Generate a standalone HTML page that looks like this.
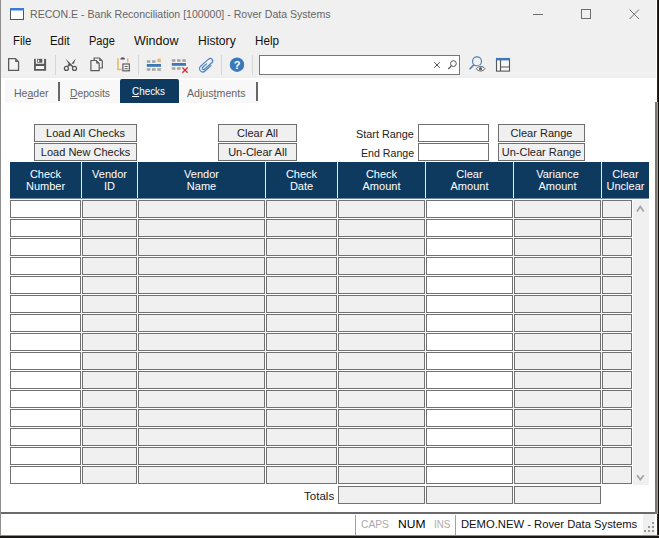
<!DOCTYPE html><html><head><meta charset="utf-8"><title>RECON.E</title><style>
*{box-sizing:border-box;margin:0;padding:0}
html,body{width:659px;height:538px;overflow:hidden;background:#fff}
body{position:relative;font-family:"Liberation Sans",sans-serif;font-size:11px;color:#000}
.a{position:absolute}
.top{left:0;top:0;width:656px;height:78px;background:#f0f0f0}
.sep{width:1px;background:#d6d6d6;top:55px;height:20px}
.tabbg{background:#f8f8f8;top:80px;height:23px}
.tsep{width:2px;background:#666;top:82px;height:19px}
.btn{border:1px solid #6f6f6f;background:#f0f0f0;height:18px;text-align:center;line-height:16px;font-size:11px;white-space:nowrap;color:#222}
.inp{border:1px solid #6f6f6f;background:#fff;height:18px}
.hd{background:#0f3a60;top:162px;height:36px;color:#fff;text-align:center;font-size:11px;line-height:12px;padding-top:5.5px;white-space:nowrap}
.c{border:1px solid #727272;height:18px}
.w{background:#fff}.g{background:#f0f0f0}
.t{white-space:nowrap;line-height:16px;transform-origin:0 50%}
</style></head><body>
<div class="a top"></div>
<div class="a" style="left:1px;top:73px;width:655px;height:1px;background:#f4f4f4"></div>
<div class="a" style="left:1px;top:74px;width:655px;height:4px;background:#eeeeee"></div>
<div class="a" style="left:1px;top:75px;width:655px;height:1px;background:#f2f2f2"></div>
<div class="a" style="left:0;top:0;width:1px;height:538px;background:#8e8e8e"></div>
<div class="a" style="left:657px;top:0;width:1px;height:538px;background:#2a2a2a"></div>
<div class="a" style="left:658px;top:0;width:1px;height:538px;background:#120e0c"></div>
<div class="a" style="left:0;top:535px;width:659px;height:1px;background:#8c8c8c"></div>
<div class="a" style="left:0;top:536px;width:659px;height:2px;background:#1a1614"></div>
<svg class="a" style="left:10px;top:8px" width="14" height="12" viewBox="0 0 14 12"><rect x="0.5" y="0.5" width="13" height="11" fill="#fff" stroke="#555" stroke-width="1"/><rect x="0" y="0" width="14" height="2.5" fill="#3a7bd5"/></svg>
<div class="a t" style="left:30px;top:5.69px;font-size:11px;color:#666;transform:scaleX(0.9600)">RECON.E - Bank Reconciliation [100000] - Rover Data Systems</div>
<svg class="a" style="left:530px;top:5px" width="120" height="20" viewBox="0 0 120 20"><path d="M3 9.5H13" stroke="#6e6e6e" stroke-width="1" fill="none"/><rect x="51.5" y="4.5" width="9" height="9" stroke="#6e6e6e" stroke-width="1" fill="none"/><path d="M99.5 4.5L109 14M109 4.5L99.5 14" stroke="#6e6e6e" stroke-width="1" fill="none"/></svg>
<div class="a t" style="left:13px;top:33.14px;font-size:12px;color:#111;transform:scaleX(0.9464)">File</div>
<div class="a t" style="left:50px;top:33.14px;font-size:12px;color:#111;transform:scaleX(0.9478)">Edit</div>
<div class="a t" style="left:89.4px;top:33.14px;font-size:12px;color:#111;transform:scaleX(0.9206)">Page</div>
<div class="a t" style="left:134px;top:33.14px;font-size:12px;color:#111;transform:scaleX(1.0403)">Window</div>
<div class="a t" style="left:197.5px;top:33.14px;font-size:12px;color:#111;transform:scaleX(1.0097)">History</div>
<div class="a t" style="left:254.6px;top:33.14px;font-size:12px;color:#111;transform:scaleX(0.9724)">Help</div>
<div class="a sep" style="left:55px"></div>
<div class="a sep" style="left:138px"></div>
<div class="a sep" style="left:221px"></div>
<div class="a sep" style="left:252px"></div>
<svg class="a" style="left:0;top:52px" width="520" height="26" viewBox="0 52 520 26"><path d="M8.65 58.65H15.4L18.55 61.8V70.35H8.65Z" fill="#f4f4f4" stroke="#5a5a5a" stroke-width="1.3"/><path d="M15.2 58.9V62H18.4Z" fill="#5a5a5a"/><rect x="34" y="58.9" width="12.1" height="11.85" fill="#5a5a5a"/><rect x="35.8" y="58.6" width="8.3" height="5.2" fill="#f0f0f0"/><rect x="37.2" y="58.9" width="5.1" height="3.8" fill="#5a5a5a"/><rect x="38" y="59.8" width="1.2" height="2.2" fill="#f0f0f0"/><rect x="35.8" y="66" width="8.3" height="3" fill="#f4f4f4"/><g fill="none" stroke="#555" stroke-width="1.2"><circle cx="66.4" cy="68.4" r="2"/><circle cx="74.5" cy="68.4" r="2"/></g><path d="M65.4 58.6L73.6 66.6L72.6 67.2L70.2 65.6L68 66.8L67.2 66.2L68.6 63.8Z" fill="#555"/><path d="M75.6 58.5L73.9 63.7L71.5 63.7Z" fill="#555"/><g fill="#f2f2f2" stroke="#5a5a5a" stroke-width="1.2"><path d="M94.1 58H99.4L102.3 60.9V68H94.1Z"/><path d="M90.9 60.5H96.3L99.2 63.4V70.7H90.9Z"/></g><path d="M96.2 60.6V63.6H99.2ZM99.3 58.1V61.1H102.3Z" fill="#5a5a5a"/><path d="M118 58.3V69.6H121.8" fill="none" stroke="#ecb267" stroke-width="1.5"/><path d="M127.7 58.3V62.4" fill="none" stroke="#ecb267" stroke-width="1.4"/><path d="M120.3 59.6C120.3 56.6 125 56.6 125 59.6Z" fill="#555"/><rect x="122.9" y="64" width="6.4" height="6.8" fill="#fff" stroke="#5a5a5a" stroke-width="1.2"/><path d="M124.5 66.4H127.8M124.5 68.7H127.8" stroke="#5a5a5a" stroke-width="1"/><g fill="#a6a6a6"><rect x="146.8" y="60.3" width="3.6" height="2.5"/><rect x="152" y="60.3" width="3.6" height="2.5"/><rect x="146.8" y="68.2" width="3.6" height="2.6"/><rect x="152" y="68.2" width="3.6" height="2.6"/><rect x="157.3" y="68.2" width="3.6" height="2.6"/></g><rect x="146.8" y="64" width="14.2" height="2.8" fill="#3d78b6"/><rect x="157.4" y="58.6" width="3.4" height="3.6" fill="#eeb36a"/><g fill="#a6a6a6"><rect x="171.8" y="59.2" width="3.6" height="2.6"/><rect x="177" y="59.2" width="3.6" height="2.6"/><rect x="182.2" y="59.2" width="3.6" height="2.6"/><rect x="171.8" y="67.2" width="3.6" height="2.6"/><rect x="177" y="67.2" width="3.6" height="2.6"/></g><rect x="171.8" y="63" width="14.2" height="2.8" fill="#3d78b6"/><path d="M182.4 67.6L187.6 72.8M187.6 67.6L182.4 72.8" stroke="#d6323a" stroke-width="1.4" fill="none"/><g transform="translate(206.6 65.2) rotate(-41.5) scale(0.85)" fill="none" stroke-linecap="round"><path d="M3.5 3.85L-6 3.85A3.85 3.85 0 0 1 -6 -3.85L6.5 -3.85A2.9 2.9 0 0 1 6.5 1.95L-5 1.95A1.6 1.6 0 0 1 -5 -1.25L1 -1.25" stroke="#dbe8f6" stroke-width="2.2"/><path d="M3.5 3.85L-6 3.85A3.85 3.85 0 0 1 -6 -3.85L6.5 -3.85A2.9 2.9 0 0 1 6.5 1.95L-5 1.95A1.6 1.6 0 0 1 -5 -1.25L1 -1.25" stroke="#4f80b9" stroke-width="1.3"/></g><circle cx="237" cy="64.7" r="7.2" fill="#3b79ba"/><text x="237" y="68.6" font-family="Liberation Sans,sans-serif" font-weight="bold" font-size="11" fill="#fff" text-anchor="middle">?</text><rect x="259.5" y="55.5" width="200" height="19" fill="#fff" stroke="#777" stroke-width="1"/><path d="M434.2 62.2L439.8 67.8M439.8 62.2L434.2 67.8" stroke="#555" stroke-width="1" fill="none"/><circle cx="453.4" cy="63.6" r="2.9" fill="none" stroke="#555" stroke-width="1"/><path d="M451.3 65.8L448.3 69" stroke="#555" stroke-width="1.2" fill="none"/><circle cx="477" cy="61.3" r="4.5" fill="none" stroke="#4a7db6" stroke-width="1.15"/><path d="M473.9 64.8L469.6 69.2" stroke="#4a7db6" stroke-width="1.6" fill="none"/><ellipse cx="480.6" cy="68.7" rx="5.2" ry="3.4" fill="#f0f0f0"/><path d="M476.3 68.7C478.2 65.6 483 65.6 484.9 68.7C483 71.8 478.2 71.8 476.3 68.7Z" fill="#fbfbfb" stroke="#606060" stroke-width="1"/><circle cx="480.5" cy="68.7" r="1.6" fill="#606060"/><rect x="496.5" y="58.5" width="13" height="12.6" fill="#f7f7f7" stroke="#555" stroke-width="1.1"/><rect x="496" y="58" width="14" height="2.4" fill="#3f78b8"/><path d="M500.5 60V71M500.5 67H509.5" stroke="#555" stroke-width="1.1" fill="none"/></svg>
<div class="a tabbg" style="left:5px;width:115px"></div>
<div class="a tabbg" style="left:180px;width:77px"></div>
<div class="a" style="left:120px;top:79px;width:59px;height:24px;background:#0f3a60;border-radius:2px 2px 0 0"></div>
<div class="a tsep" style="left:58px"></div>
<div class="a tsep" style="left:256px"></div>
<div class="a t" style="left:13.5px;top:84.99px;font-size:11px;color:#666;transform:scaleX(0.9562)">He<u>a</u>der</div>
<div class="a t" style="left:70px;top:84.99px;font-size:11px;color:#666;transform:scaleX(0.9346)"><u>D</u>eposits</div>
<div class="a t" style="left:132px;top:82.69px;font-size:11px;color:#fff;transform:scaleX(0.8997)"><u>C</u>hecks</div>
<div class="a t" style="left:187px;top:85.09px;font-size:11px;color:#666;transform:scaleX(0.9665)">Adjus<u>t</u>ments</div>
<div class="a btn" style="left:34px;top:124px;width:103px">Load All Checks</div>
<div class="a btn" style="left:34px;top:143px;width:103px">Load New Checks</div>
<div class="a btn" style="left:218px;top:124px;width:79px">Clear All</div>
<div class="a btn" style="left:218px;top:143px;width:79px">Un-Clear All</div>
<div class="a btn" style="left:498px;top:124px;width:87px">Clear Range</div>
<div class="a btn" style="left:498px;top:143px;width:87px">Un-Clear Range</div>
<div class="a inp" style="left:418px;top:124px;width:71px"></div>
<div class="a inp" style="left:418px;top:143px;width:71px"></div>
<div class="a t" style="left:355.7px;top:126.19px;font-size:11px;color:#222;transform:scaleX(0.9863)">Start Range</div>
<div class="a t" style="left:360.5px;top:144.79px;font-size:11px;color:#222;transform:scaleX(0.9647)">End Range</div>
<div class="a" style="left:10px;top:162px;width:639px;height:36px;background:#e4edf7"></div>
<div class="a" style="left:10px;top:198px;width:639px;height:1px;background:#6f89a0"></div>
<div class="a hd" style="left:10px;width:71px">Check<br>Number</div>
<div class="a hd" style="left:82px;width:55px">Vendor<br>ID</div>
<div class="a hd" style="left:138px;width:127px">Vendor<br>Name</div>
<div class="a hd" style="left:266px;width:71px">Check<br>Date</div>
<div class="a hd" style="left:338px;width:87px">Check<br>Amount</div>
<div class="a hd" style="left:426px;width:87px">Clear<br>Amount</div>
<div class="a hd" style="left:514px;width:87px">Variance<br>Amount</div>
<div class="a hd" style="left:602px;width:47px">Clear<br>Unclear</div>
<div class="a" style="left:633px;top:200px;width:16px;height:285px;background:#f0f0f0"></div>
<svg class="a" style="left:633px;top:200px" width="16" height="285" viewBox="0 0 16 285"><path d="M4 11.4L7.3 6.6L10.7 11.4" stroke="#a3a3a3" stroke-width="1.7" fill="none"/><path d="M4 275.2L7.3 279.6L10.7 275.2" stroke="#a3a3a3" stroke-width="1.7" fill="none"/></svg>
<div class="a c w" style="left:10px;top:200px;width:71px"></div>
<div class="a c g" style="left:82px;top:200px;width:55px"></div>
<div class="a c g" style="left:138px;top:200px;width:127px"></div>
<div class="a c g" style="left:266px;top:200px;width:71px"></div>
<div class="a c g" style="left:338px;top:200px;width:87px"></div>
<div class="a c w" style="left:426px;top:200px;width:87px"></div>
<div class="a c g" style="left:514px;top:200px;width:87px"></div>
<div class="a c g" style="left:602px;top:200px;width:30px"></div>
<div class="a c w" style="left:10px;top:219px;width:71px"></div>
<div class="a c g" style="left:82px;top:219px;width:55px"></div>
<div class="a c g" style="left:138px;top:219px;width:127px"></div>
<div class="a c g" style="left:266px;top:219px;width:71px"></div>
<div class="a c g" style="left:338px;top:219px;width:87px"></div>
<div class="a c w" style="left:426px;top:219px;width:87px"></div>
<div class="a c g" style="left:514px;top:219px;width:87px"></div>
<div class="a c g" style="left:602px;top:219px;width:30px"></div>
<div class="a c w" style="left:10px;top:238px;width:71px"></div>
<div class="a c g" style="left:82px;top:238px;width:55px"></div>
<div class="a c g" style="left:138px;top:238px;width:127px"></div>
<div class="a c g" style="left:266px;top:238px;width:71px"></div>
<div class="a c g" style="left:338px;top:238px;width:87px"></div>
<div class="a c w" style="left:426px;top:238px;width:87px"></div>
<div class="a c g" style="left:514px;top:238px;width:87px"></div>
<div class="a c g" style="left:602px;top:238px;width:30px"></div>
<div class="a c w" style="left:10px;top:257px;width:71px"></div>
<div class="a c g" style="left:82px;top:257px;width:55px"></div>
<div class="a c g" style="left:138px;top:257px;width:127px"></div>
<div class="a c g" style="left:266px;top:257px;width:71px"></div>
<div class="a c g" style="left:338px;top:257px;width:87px"></div>
<div class="a c w" style="left:426px;top:257px;width:87px"></div>
<div class="a c g" style="left:514px;top:257px;width:87px"></div>
<div class="a c g" style="left:602px;top:257px;width:30px"></div>
<div class="a c w" style="left:10px;top:276px;width:71px"></div>
<div class="a c g" style="left:82px;top:276px;width:55px"></div>
<div class="a c g" style="left:138px;top:276px;width:127px"></div>
<div class="a c g" style="left:266px;top:276px;width:71px"></div>
<div class="a c g" style="left:338px;top:276px;width:87px"></div>
<div class="a c w" style="left:426px;top:276px;width:87px"></div>
<div class="a c g" style="left:514px;top:276px;width:87px"></div>
<div class="a c g" style="left:602px;top:276px;width:30px"></div>
<div class="a c w" style="left:10px;top:295px;width:71px"></div>
<div class="a c g" style="left:82px;top:295px;width:55px"></div>
<div class="a c g" style="left:138px;top:295px;width:127px"></div>
<div class="a c g" style="left:266px;top:295px;width:71px"></div>
<div class="a c g" style="left:338px;top:295px;width:87px"></div>
<div class="a c w" style="left:426px;top:295px;width:87px"></div>
<div class="a c g" style="left:514px;top:295px;width:87px"></div>
<div class="a c g" style="left:602px;top:295px;width:30px"></div>
<div class="a c w" style="left:10px;top:314px;width:71px"></div>
<div class="a c g" style="left:82px;top:314px;width:55px"></div>
<div class="a c g" style="left:138px;top:314px;width:127px"></div>
<div class="a c g" style="left:266px;top:314px;width:71px"></div>
<div class="a c g" style="left:338px;top:314px;width:87px"></div>
<div class="a c w" style="left:426px;top:314px;width:87px"></div>
<div class="a c g" style="left:514px;top:314px;width:87px"></div>
<div class="a c g" style="left:602px;top:314px;width:30px"></div>
<div class="a c w" style="left:10px;top:333px;width:71px"></div>
<div class="a c g" style="left:82px;top:333px;width:55px"></div>
<div class="a c g" style="left:138px;top:333px;width:127px"></div>
<div class="a c g" style="left:266px;top:333px;width:71px"></div>
<div class="a c g" style="left:338px;top:333px;width:87px"></div>
<div class="a c w" style="left:426px;top:333px;width:87px"></div>
<div class="a c g" style="left:514px;top:333px;width:87px"></div>
<div class="a c g" style="left:602px;top:333px;width:30px"></div>
<div class="a c w" style="left:10px;top:352px;width:71px"></div>
<div class="a c g" style="left:82px;top:352px;width:55px"></div>
<div class="a c g" style="left:138px;top:352px;width:127px"></div>
<div class="a c g" style="left:266px;top:352px;width:71px"></div>
<div class="a c g" style="left:338px;top:352px;width:87px"></div>
<div class="a c w" style="left:426px;top:352px;width:87px"></div>
<div class="a c g" style="left:514px;top:352px;width:87px"></div>
<div class="a c g" style="left:602px;top:352px;width:30px"></div>
<div class="a c w" style="left:10px;top:371px;width:71px"></div>
<div class="a c g" style="left:82px;top:371px;width:55px"></div>
<div class="a c g" style="left:138px;top:371px;width:127px"></div>
<div class="a c g" style="left:266px;top:371px;width:71px"></div>
<div class="a c g" style="left:338px;top:371px;width:87px"></div>
<div class="a c w" style="left:426px;top:371px;width:87px"></div>
<div class="a c g" style="left:514px;top:371px;width:87px"></div>
<div class="a c g" style="left:602px;top:371px;width:30px"></div>
<div class="a c w" style="left:10px;top:390px;width:71px"></div>
<div class="a c g" style="left:82px;top:390px;width:55px"></div>
<div class="a c g" style="left:138px;top:390px;width:127px"></div>
<div class="a c g" style="left:266px;top:390px;width:71px"></div>
<div class="a c g" style="left:338px;top:390px;width:87px"></div>
<div class="a c w" style="left:426px;top:390px;width:87px"></div>
<div class="a c g" style="left:514px;top:390px;width:87px"></div>
<div class="a c g" style="left:602px;top:390px;width:30px"></div>
<div class="a c w" style="left:10px;top:409px;width:71px"></div>
<div class="a c g" style="left:82px;top:409px;width:55px"></div>
<div class="a c g" style="left:138px;top:409px;width:127px"></div>
<div class="a c g" style="left:266px;top:409px;width:71px"></div>
<div class="a c g" style="left:338px;top:409px;width:87px"></div>
<div class="a c w" style="left:426px;top:409px;width:87px"></div>
<div class="a c g" style="left:514px;top:409px;width:87px"></div>
<div class="a c g" style="left:602px;top:409px;width:30px"></div>
<div class="a c w" style="left:10px;top:428px;width:71px"></div>
<div class="a c g" style="left:82px;top:428px;width:55px"></div>
<div class="a c g" style="left:138px;top:428px;width:127px"></div>
<div class="a c g" style="left:266px;top:428px;width:71px"></div>
<div class="a c g" style="left:338px;top:428px;width:87px"></div>
<div class="a c w" style="left:426px;top:428px;width:87px"></div>
<div class="a c g" style="left:514px;top:428px;width:87px"></div>
<div class="a c g" style="left:602px;top:428px;width:30px"></div>
<div class="a c w" style="left:10px;top:447px;width:71px"></div>
<div class="a c g" style="left:82px;top:447px;width:55px"></div>
<div class="a c g" style="left:138px;top:447px;width:127px"></div>
<div class="a c g" style="left:266px;top:447px;width:71px"></div>
<div class="a c g" style="left:338px;top:447px;width:87px"></div>
<div class="a c w" style="left:426px;top:447px;width:87px"></div>
<div class="a c g" style="left:514px;top:447px;width:87px"></div>
<div class="a c g" style="left:602px;top:447px;width:30px"></div>
<div class="a c w" style="left:10px;top:466px;width:71px"></div>
<div class="a c g" style="left:82px;top:466px;width:55px"></div>
<div class="a c g" style="left:138px;top:466px;width:127px"></div>
<div class="a c g" style="left:266px;top:466px;width:71px"></div>
<div class="a c g" style="left:338px;top:466px;width:87px"></div>
<div class="a c w" style="left:426px;top:466px;width:87px"></div>
<div class="a c g" style="left:514px;top:466px;width:87px"></div>
<div class="a c g" style="left:602px;top:466px;width:30px"></div>
<div class="a t" style="left:303.8px;top:487.69px;font-size:11px;color:#222;transform:scaleX(1.0510)">Totals</div>
<div class="a c g" style="left:338px;top:486px;width:87px"></div>
<div class="a c g" style="left:426px;top:486px;width:87px"></div>
<div class="a c g" style="left:514px;top:486px;width:87px"></div>
<div class="a" style="left:1px;top:512px;width:656px;height:2px;background:#6a6a6a"></div>
<div class="a" style="left:655px;top:102px;width:2px;height:412px;background:#757575"></div>
<div class="a" style="left:657px;top:102px;width:1px;height:412px;background:#a09b98"></div>
<div class="a" style="left:355px;top:515px;width:1px;height:20px;background:#a0a0a0"></div>
<div class="a" style="left:455px;top:515px;width:1px;height:20px;background:#a0a0a0"></div>
<div class="a t" style="left:360.6px;top:515.69px;font-size:11px;color:#aaa;transform:scaleX(0.9314)">CAPS</div>
<div class="a t" style="left:398px;top:515.69px;font-size:11px;color:#000;transform:scaleX(1.0937)">NUM</div>
<div class="a t" style="left:434px;top:515.69px;font-size:11px;color:#aaa;transform:scaleX(0.8943)">INS</div>
<div class="a t" style="left:460.6px;top:515.69px;font-size:11px;color:#111;transform:scaleX(1.0223)">DEMO.NEW - Rover Data Systems</div>
<div class="a" style="left:643px;top:514px;width:12px;height:21px;background:#f0f0f0"></div>
<svg class="a" style="left:643px;top:520px" width="14" height="14" viewBox="0 0 14 14"><g fill="#9a9a9a"><rect x="9" y="2" width="2" height="2"/><rect x="9" y="6" width="2" height="2"/><rect x="9" y="10" width="2" height="2"/><rect x="5" y="6" width="2" height="2"/><rect x="5" y="10" width="2" height="2"/><rect x="1" y="10" width="2" height="2"/></g></svg>
</body></html>
